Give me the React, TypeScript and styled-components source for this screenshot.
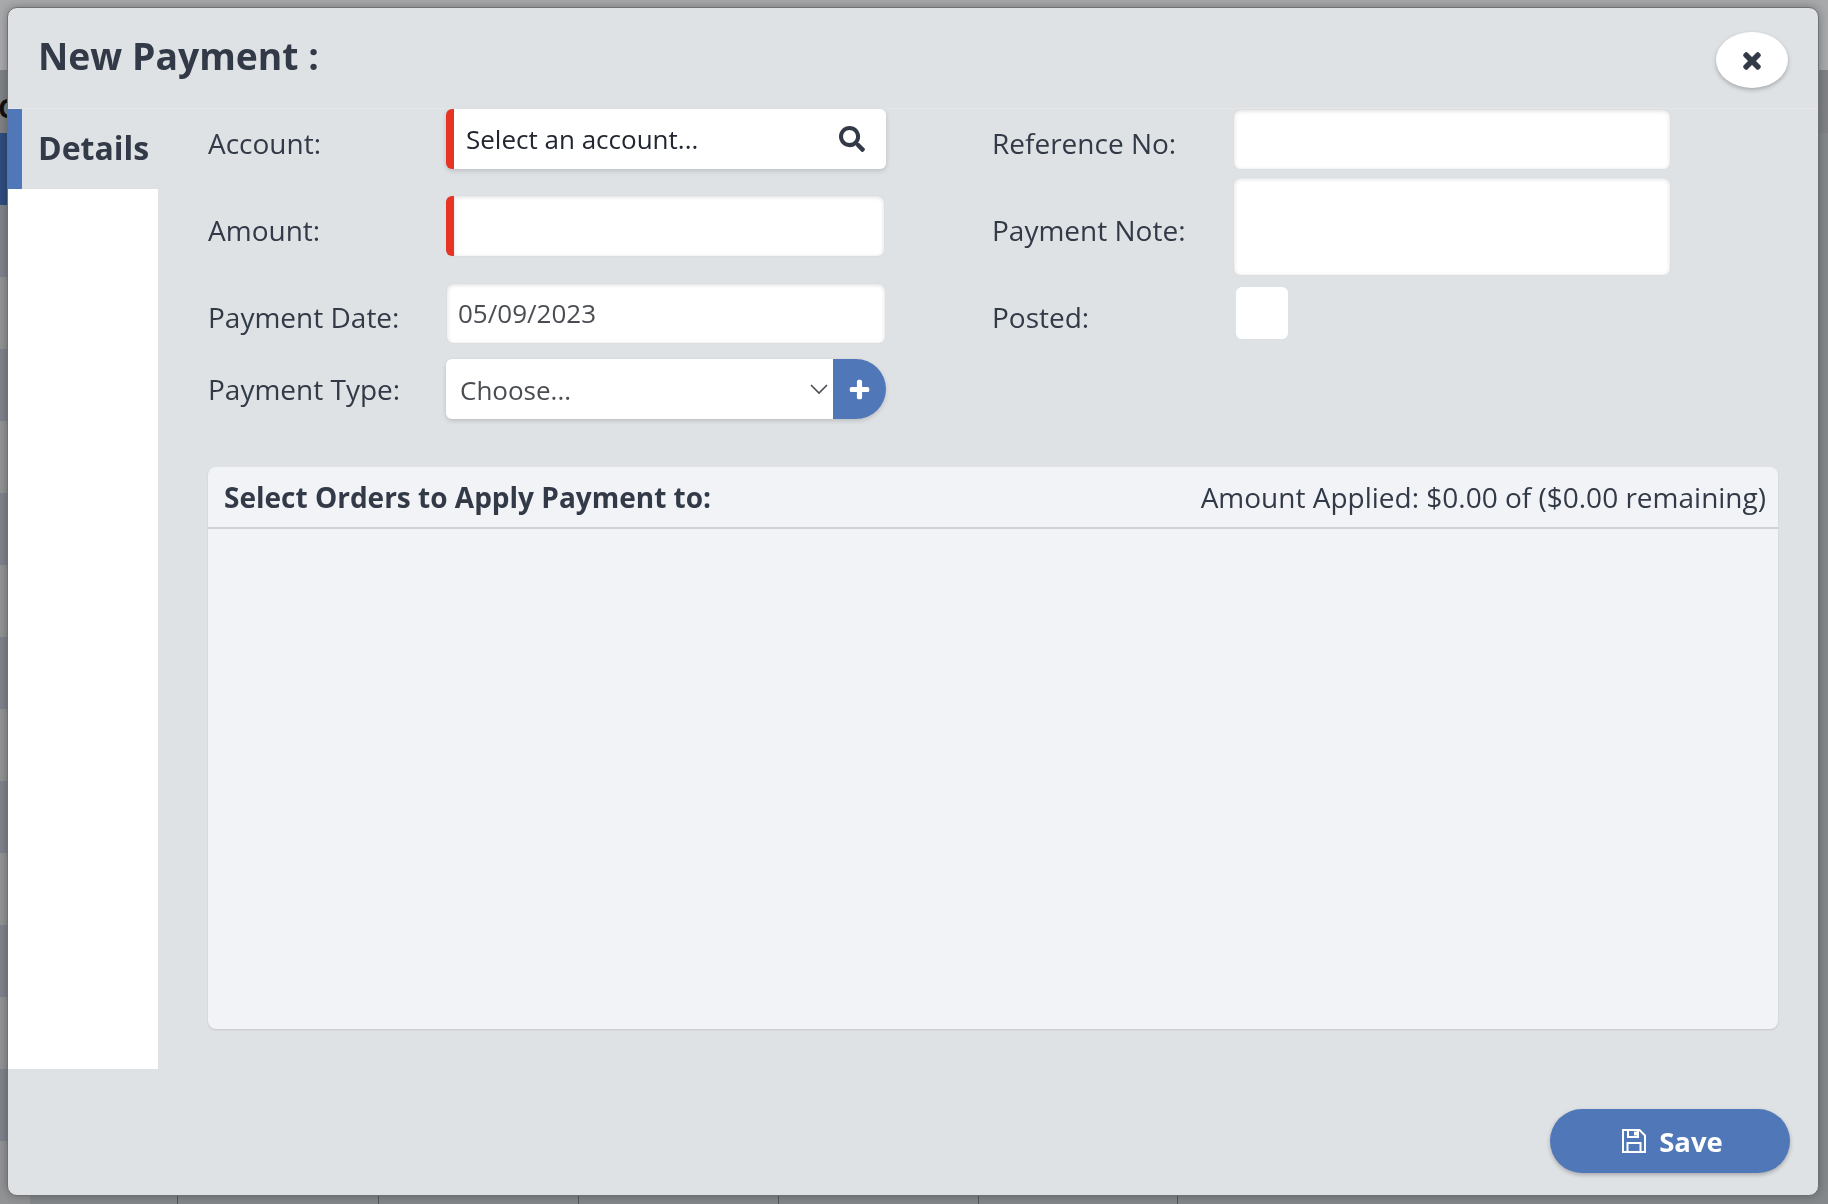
import React from 'react';
import styled, {createGlobalStyle} from 'styled-components';
import {FaSearch, FaPlus, FaTimes} from 'react-icons/fa';

const GlobalStyle = createGlobalStyle`
  html, body {
    margin: 0;
    height: 100%;
    overflow: hidden;
    background: #85888b;
    font-family: "Open Sans", "Noto Sans", sans-serif;
  }
`;

const Backdrop = styled.div`
  width: 1828px;
  height: 1204px;
  overflow: hidden;
  display: flex;
  flex-direction: column;
  background: #85888b;
`;

const BackdropHead = styled.div`
  height: 133px;
  flex: none;
  box-sizing: border-box;
  background: #808285;
  border-top: 70px solid #a8a9ab;
  padding-top: 24px;
  color: #111;
  font-size: 27px;
  line-height: 28px;
  font-weight: 700;
  text-indent: -2px;
`;

const BackdropRow = styled.div<{$tone: 'blue' | 'dark' | 'light'}>`
  height: 72px;
  flex: none;
  display: flex;
  background: linear-gradient(
    to right,
    ${({$tone}) => ($tone === 'blue' ? '#2f4d7e' : $tone === 'dark' ? '#7f838b' : '#929395')} 30px,
    transparent 30px
  );
`;

const BackdropCell = styled.div<{$width: number}>`
  width: ${({$width}) => $width}px;
  box-sizing: border-box;
  border-right: 1px solid #55575a;
`;

const Modal = styled.div`
  position: fixed;
  left: 7px;
  top: 7px;
  width: 1812px;
  height: 1189px;
  box-sizing: border-box;
  display: flex;
  flex-direction: column;
  background: #dfe2e5;
  border: 1px solid #6f7173;
  border-radius: 10px;
  box-shadow: 0 0 10px rgba(0, 0, 0, 0.3);
  color: #333a47;
  overflow: hidden;
`;

const Header = styled.header`
  height: 101px;
  flex: none;
  box-sizing: border-box;
  display: flex;
  align-items: flex-start;
  justify-content: space-between;
  padding: 24px 30px 0 30px;
  border-bottom: 1px solid #e7e7e7;
`;

const Title = styled.h1`
  margin: 0;
  font-size: 37.3px;
  line-height: 48px;
  font-weight: 700;
`;

const CloseButton = styled.button`
  width: 72px;
  height: 56px;
  border: 0;
  padding: 2px 0 0;
  border-radius: 50%;
  background: #fff;
  color: #333a47;
  display: flex;
  align-items: center;
  justify-content: center;
  font-size: 24px;
  box-shadow: 0 2px 4px rgba(0, 0, 0, 0.25);

  svg {
    stroke: currentColor;
    stroke-width: 24px;
  }
`;

const Body = styled.div`
  flex: 1;
  display: flex;
  min-height: 0;
`;

const Sidebar = styled.nav`
  width: 150px;
  height: 960px;
  flex: none;
  background: #fff;
`;

const Tab = styled.div`
  height: 80px;
  box-sizing: border-box;
  background: #dfe2e5;
  border-left: 14px solid #5078b8;
  padding: 17px 0 0 16px;
  font-size: 32px;
  line-height: 44px;
  font-weight: 700;
`;

const Content = styled.main`
  flex: 1;
  display: flex;
  flex-direction: column;
  padding: 0 40px 0 50px;
  min-width: 0;
`;

const FormGrid = styled.div`
  display: grid;
  grid-template-columns: 238px 440px 106px 242px 436px;
  grid-template-rows: 87px 88px 75px 60px;
  align-items: start;
`;

const Label = styled.label<{$top?: number}>`
  font-size: 28px;
  line-height: 36px;
  padding-top: ${({$top}) => $top ?? 16}px;
  white-space: nowrap;
`;

const LabelRight = styled(Label)`
  grid-column: 4;
`;

const SearchBox = styled.div`
  height: 60px;
  box-sizing: border-box;
  display: flex;
  align-items: center;
  justify-content: space-between;
  padding: 0 21px 0 12px;
  background: #fff;
  border-left: 8px solid #e63323;
  border-radius: 6px;
  box-shadow: 0 2px 5px rgba(0, 0, 0, 0.15);
  color: #212631;
  font-size: 26px;
`;

const Field = styled.div<{$required?: boolean; $flush?: boolean; $height?: number; $offset?: number}>`
  height: ${({$height}) => $height ?? 59}px;
  box-sizing: border-box;
  margin-top: ${({$offset}) => $offset ?? 0}px;
  margin-left: ${({$required, $flush}) => ($required || $flush ? '0' : '1px')};
  margin-right: ${({$required, $flush}) => ($flush ? '0' : $required ? '2px' : '1px')};
  padding: 0 11px 2px;
  display: flex;
  align-items: center;
  background: #fff;
  border-left: ${({$required}) => ($required ? '8px solid #e63323' : '0')};
  border-radius: 6px;
  box-shadow: inset 0 1px 4px rgba(0, 0, 0, 0.14), 0 0 2px rgba(0, 0, 0, 0.06);
  color: #4a4d52;
  font-size: 26px;
`;

const Checkbox = styled.div`
  width: 52px;
  height: 52px;
  margin: 3px 0 0 2px;
  background: #fff;
  border-radius: 6px;
`;

const TypeGroup = styled.div`
  display: flex;
  height: 60px;
  filter: drop-shadow(0 2px 2px rgba(0, 0, 0, 0.15));
`;

const TypeSelect = styled.div`
  width: 387px;
  box-sizing: border-box;
  display: flex;
  align-items: center;
  justify-content: space-between;
  padding: 2px 5px 0 14px;
  background: #fff;
  border-radius: 6px 0 0 6px;
  color: #4a4d52;
  font-size: 26px;

  svg {
    margin-top: -2px;
  }
`;

const AddButton = styled.button`
  width: 53px;
  border: 0;
  padding: 0 1px 0 0;
  background: #5078b8;
  color: #fff;
  border-radius: 0 30px 30px 0;
  display: flex;
  align-items: center;
  justify-content: center;
  font-size: 21px;

  svg {
    stroke: currentColor;
    stroke-width: 30px;
  }
`;

const OrdersPanel = styled.section`
  margin-top: 48px;
  height: 562px;
  background: #f1f3f7;
  border-radius: 8px;
  box-shadow: 0 1px 2px rgba(0, 0, 0, 0.12);
`;

const PanelHeader = styled.div`
  height: 62px;
  box-sizing: border-box;
  display: flex;
  align-items: center;
  justify-content: space-between;
  padding: 0 12px 0 16px;
  border-bottom: 2px solid #cfd1d3;
  font-size: 28px;
`;

const PanelTitle = styled.strong`
  font-weight: 700;
`;

const Footer = styled.footer`
  position: absolute;
  right: 28px;
  bottom: 22px;
`;

const SaveButton = styled.button`
  width: 240px;
  height: 64px;
  border: 0;
  padding: 0 0 0 5px;
  border-radius: 32px;
  background: #5078b8;
  color: #fff;
  display: flex;
  align-items: center;
  justify-content: center;
  gap: 13px;
  font-family: inherit;
  font-size: 27.5px;
  font-weight: 700;
  box-shadow: 0 2px 4px rgba(0, 0, 0, 0.25);
`;

const Chevron = () => (
  <svg width="18" height="11" viewBox="0 0 18 11" fill="none" stroke="#4a4d52" strokeWidth="1.6">
    <path d="M1 1l8 8 8-8" />
  </svg>
);

const SaveIcon = () => (
  <svg width="24" height="24" viewBox="0 0 24 24" fill="none" stroke="#fff" strokeWidth="2">
    <path d="M1 1h16.5L23 6.5V23H1z" />
    <path d="M6 1v7h10V1" />
    <path d="M5.5 23v-9h13v9" />
    <path d="M12 2.5h3v4h-3z" fill="#fff" stroke="none" />
  </svg>
);

const rowTones = ['blue', 'dark', 'light', 'dark', 'light', 'dark', 'light', 'dark', 'light', 'dark', 'light', 'dark', 'light', 'dark'] as const;
const lastRowCells = [178, 201, 200, 200, 200, 199];

export default function App() {
  return (
    <>
      <GlobalStyle />
      <Backdrop>
        <BackdropHead>Co</BackdropHead>
        {rowTones.map((tone, i) => (
          <BackdropRow key={i} $tone={tone} />
        ))}
        <BackdropRow $tone="light">
          {lastRowCells.map((w, i) => (
            <BackdropCell key={i} $width={w} />
          ))}
        </BackdropRow>
      </Backdrop>
      <Modal>
        <Header>
          <Title>New Payment :</Title>
          <CloseButton aria-label="Close">
            <FaTimes />
          </CloseButton>
        </Header>
        <Body>
          <Sidebar>
            <Tab>Details</Tab>
          </Sidebar>
          <Content>
            <FormGrid>
              <Label>Account:</Label>
              <SearchBox>
                Select an account...
                <FaSearch size={26} color="#333a47" />
              </SearchBox>
              <LabelRight>Reference No:</LabelRight>
              <Field $flush $height={59} $offset={1} />

              <Label>Amount:</Label>
              <Field $required $height={60} />
              <LabelRight>Payment Note:</LabelRight>
              <Field $flush $height={97} $offset={-18} />

              <Label $top={15}>Payment Date:</Label>
              <Field>05/09/2023</Field>
              <LabelRight $top={15}>Posted:</LabelRight>
              <Checkbox />

              <Label $top={12}>Payment Type:</Label>
              <TypeGroup>
                <TypeSelect>
                  Choose...
                  <Chevron />
                </TypeSelect>
                <AddButton aria-label="Add">
                  <FaPlus />
                </AddButton>
              </TypeGroup>
            </FormGrid>
            <OrdersPanel>
              <PanelHeader>
                <PanelTitle>Select Orders to Apply Payment to:</PanelTitle>
                <span>Amount Applied: $0.00 of ($0.00 remaining)</span>
              </PanelHeader>
            </OrdersPanel>
          </Content>
        </Body>
        <Footer>
          <SaveButton>
            <SaveIcon />
            Save
          </SaveButton>
        </Footer>
      </Modal>
    </>
  );
}
